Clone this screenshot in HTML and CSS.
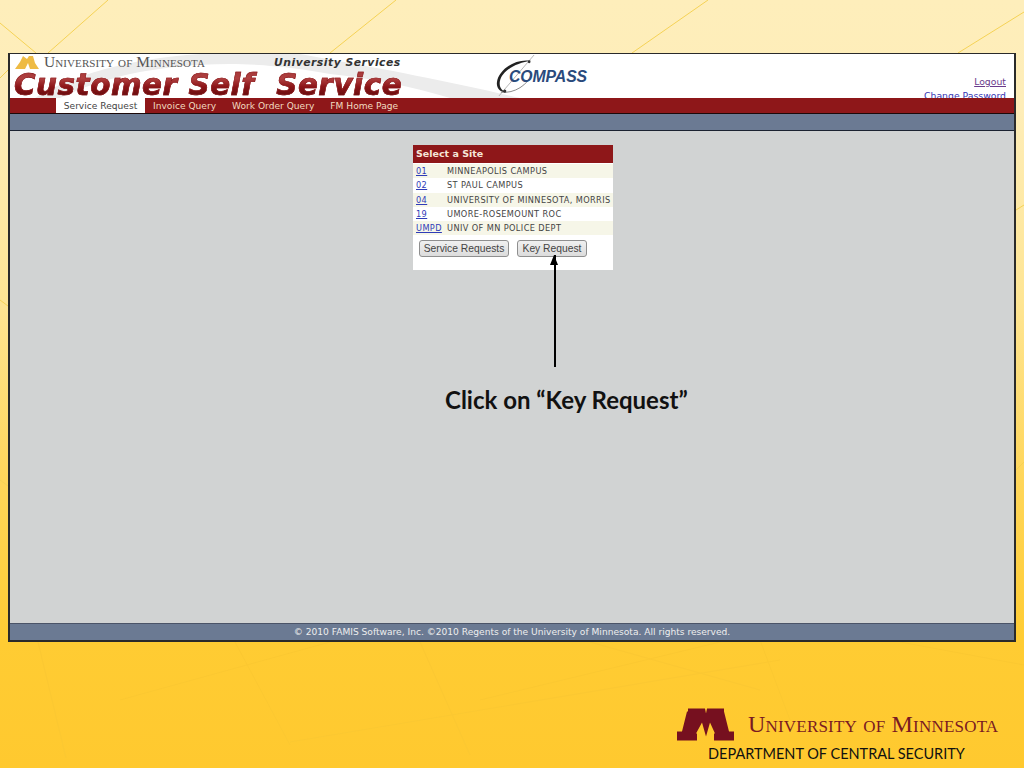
FILE: index.html
```html
<!DOCTYPE html>
<html lang="en">
<head>
<meta charset="utf-8">
<title>Customer Self Service</title>
<link rel="stylesheet" href="styles.css">
</head>
<body>
<svg class="bg-lines" viewBox="0 0 1024 768" aria-hidden="true">
  <g class="line-top">
    <path d="M48 53 L108 0"/><path d="M0 23 L36 53"/><path d="M0 78 L8 70"/><path d="M330 53 L396 0"/><path d="M632 53 L708 0"/><path d="M958 53 L1024 12"/>
    <path d="M1016 210 L1024 205"/><path d="M0 300 L8 306"/><path d="M1016 470 L1024 462"/><path d="M0 480 L8 486"/>
  </g>
  <g class="line-bottom">
    <path d="M38 642 L66 758"/><path d="M120 700 L330 642"/><path d="M235 642 L290 745"/><path d="M420 642 L470 755"/><path d="M290 742 L780 660"/><path d="M590 642 L760 690"/><path d="M480 700 L720 642"/><path d="M760 640 L790 720"/><path d="M900 642 L1024 665"/>
  </g>
</svg>
<main class="window">
  <header class="masthead">
    <svg class="swoosh" viewBox="0 0 1004 44" aria-hidden="true"><path d="M25 44 C60 22 120 4 190 0 L290 0 L323 6 C370 14 450 30 510 44 L440 44 C400 32 360 24 320 20 C290 14 250 10 220 10 C180 10 150 14 120 20 C95 26 70 34 50 44 Z"/></svg>
    <div class="brand">
      <div class="brand-top">
        <svg class="mini-m" viewBox="0 0 24 14" aria-hidden="true"><path d="M0 14 L5 7 L8 1 L12 4 L14 1 L18 1 L20 8 L24 14 L15 14 L13 8 L10 14 Z"/></svg>
        <span class="umn-small">University of Minnesota</span>
        <span class="services">University Services</span>
      </div>
      <div class="product">Customer Self&nbsp; Service</div>
    </div>
    <div class="compass">
      <svg class="compass-orbit" viewBox="0 0 42 42" aria-hidden="true">
        <path class="needle" d="M40 0 L4 42"/>
        <path class="orbit" d="M37 6 C20 3 3 16 2 28 C1 35 7 39 12 38 C7 37 4 33 5 27 C7 16 22 8 37 6 Z"/>
        <path class="orbit-thin" d="M6 38 C20 40 34 30 37 20"/>
        <circle class="pin" cx="35" cy="7" r="1.4"/><circle class="pin" cx="10" cy="37" r="1.6"/>
      </svg>
      <span class="compass-word">COMPASS</span>
    </div>
    <div class="account">
      <a class="logout" href="#">Logout</a>
      <a href="#">Change Password</a>
    </div>
  </header>
  <nav class="tabs">
    <a class="tab active" href="#">Service Request</a>
    <a class="tab" href="#">Invoice Query</a>
    <a class="tab" href="#">Work Order Query</a>
    <a class="tab" href="#">FM Home Page</a>
  </nav>
  <div class="subbar"></div>
  <section class="content">
    <div class="card">
      <h2 class="card-title">Select a Site</h2>
      <div class="site-row odd"><a href="#">01</a><span>MINNEAPOLIS CAMPUS</span></div>
      <div class="site-row"><a href="#">02</a><span>ST PAUL CAMPUS</span></div>
      <div class="site-row odd"><a href="#">04</a><span>UNIVERSITY OF MINNESOTA, MORRIS</span></div>
      <div class="site-row"><a href="#">19</a><span>UMORE-ROSEMOUNT ROC</span></div>
      <div class="site-row odd"><a href="#">UMPD</a><span>UNIV OF MN POLICE DEPT</span></div>
      <div class="actions">
        <button class="btn btn-service" type="button">Service Requests</button>
        <button class="btn btn-key" type="button">Key Request</button>
      </div>
    </div>
    <div class="arrow"></div>
    <p class="callout">Click on “Key Request”</p>
  </section>
  <footer class="legal">© 2010 FAMIS Software, Inc. ©2010 Regents of the University of Minnesota. All rights reserved.</footer>
</main>
<div class="slide-foot">
  <div class="umn-row">
    <svg class="umn-m" viewBox="0 0 57 32" aria-hidden="true"><path d="M11 0 H28 L29 5 L30 0 H47 V3 L52 23 H57 V32 H37 V25 H38 L33 14 L29 28 L25 14 L19 25 H20 V32 H0 V23 H5 L10 3 H11 Z"/></svg>
    <span class="umn-name">University of Minnesota</span>
  </div>
  <div class="dept">DEPARTMENT OF CENTRAL SECURITY</div>
</div>
</body>
</html>
```
FILE: styles.css
```css
* { box-sizing: border-box; }
html, body { margin: 0; height: 768px; overflow: hidden; }
body {
  position: relative;
  padding: 53px 8px 0;
  background: linear-gradient(180deg, #feeebb 0, #feedb8 110px, #fee594 300px, #ffd65a 480px, #ffcc33 640px, #ffc92f 768px);
  font-family: "DejaVu Sans", sans-serif;
}
.bg-lines { position: absolute; left: 0; top: 0; width: 1024px; height: 768px; }
.bg-lines path { fill: none; stroke-width: 1; }
.line-top { stroke: #f5d256; }
.line-bottom { stroke: #fbc832; }
.window {
  position: relative;
  display: flex;
  flex-direction: column;
  width: 1008px;
  height: 589px;
  border: 1px solid #2a2a2a;
  border-width: 1px 2px 2px 2px;
  background: #d1d3d3;
}
.masthead {
  position: relative;
  display: flex;
  height: 44px;
  overflow: hidden;
  background: #fff;
}
.swoosh { position: absolute; left: 0; top: 0; width: 1004px; height: 44px; fill: #ececec; }
.brand { position: relative; width: 392px; padding: 0 0 0 4px; }
.brand-top { display: flex; align-items: center; height: 16px; }
.mini-m { width: 24px; height: 14px; margin-left: 1px; fill: #eebb44; flex: none; }
.umn-small {
  margin-left: 5px;
  width: 230px;
  font: 15.4px/16px "Liberation Serif", serif;
  font-variant: small-caps;
  letter-spacing: 0.1px;
  color: #555;
  white-space: nowrap;
}
.services {
  padding-top: 1px;
  font: italic 700 10.8px/16px "DejaVu Sans", sans-serif;
  letter-spacing: 0.5px;
  color: #333;
  white-space: nowrap;
}
.product {
  width: max-content;
  font: italic 700 31px/28px "DejaVu Sans", sans-serif;
  letter-spacing: 0.6px;
  white-space: nowrap;
  transform: scaleX(0.947);
  transform-origin: left center;
  background: linear-gradient(180deg, #a43838 0, #b04040 30%, #8c1518 60%, #5e0b0d 100%);
  -webkit-background-clip: text;
  background-clip: text;
  color: transparent;
  -webkit-text-stroke: 0.6px #8a1a1c;
}
.compass { position: relative; display: flex; margin-left: 93px; width: 100px; height: 44px; }
.compass-orbit { position: absolute; left: 0; top: 1px; width: 41px; height: 41px; }
.needle { stroke: #b5b5b5; stroke-width: 1; fill: none; }
.orbit { fill: #222; }
.orbit-thin { fill: none; stroke: #555; stroke-width: .7; }
.pin { fill: #333; }
.compass-word {
  position: relative;
  margin: 14px 0 0 14px;
  font: italic 700 15.8px/18px "Liberation Sans", sans-serif;
  letter-spacing: -0.1px;
  color: #2a4a7c;
  white-space: nowrap;
}
.account {
  position: relative;
  display: flex;
  flex-direction: column;
  align-items: flex-end;
  gap: 5px;
  margin-left: auto;
  padding: 23px 8px 0 0;
  font-size: 9.3px;
  line-height: 9px;
}
.account a { color: #3535b5; }
.account .logout { color: #6a3a8c; }
.tabs {
  display: flex;
  gap: 16px;
  height: 16px;
  padding-left: 46px;
  border-bottom: 1px solid #1c0808;
  background: #8e1719;
}
.tab {
  font-size: 9.1px;
  line-height: 16px;
  color: #f2dcc0;
  text-decoration: none;
  white-space: nowrap;
}
.tab.active { width: 89px; margin-right: -8px; background: #fff; color: #444; text-align: center; }
.subbar {
  height: 17px;
  border-bottom: 1px solid #1b2230;
  background: #6b7a93;
}
.content { position: relative; flex: 1; }
.card {
  position: absolute;
  left: 403px;
  top: 14px;
  width: 200px;
  height: 125px;
  background: #fff;
}
.card-title {
  margin: 0 0 1px;
  height: 18px;
  padding-left: 3px;
  background: #8e1719;
  color: #f6e6d8;
  font: 700 9.5px/18px "DejaVu Sans", sans-serif;
}
.site-row {
  display: flex;
  height: 14.3px;
  padding-left: 3px;
  font-size: 8.2px;
  line-height: 15px;
  letter-spacing: 0.4px;
  color: #444;
  white-space: nowrap;
}
.site-row.odd { background: #f6f6e8; }
.site-row a { width: 31px; color: #2f3cb8; }
.actions { display: flex; gap: 8px; padding: 5px 0 0 6px; }
.btn {
  height: 17px;
  padding: 0;
  border: 1px solid #8f8f8f;
  border-radius: 3px;
  background: linear-gradient(180deg, #f0f0f0, #dcdcdc);
  color: #444;
  font: 10.3px/15px "Liberation Sans", sans-serif;
  white-space: nowrap;
}
.btn-service { width: 90px; }
.btn-key { width: 70px; }
.arrow {
  position: absolute;
  left: 544px;
  top: 124px;
  width: 1.5px;
  height: 112px;
  background: #000;
}
.arrow::before {
  content: "";
  position: absolute;
  left: -4px;
  top: 0;
  border: 4px solid transparent;
  border-top: 0;
  border-bottom: 10px solid #000;
}
.callout {
  position: absolute;
  left: 435px;
  top: 255px;
  margin: 0;
  font: 700 24px/28px Lato, sans-serif;
  color: #111;
  white-space: nowrap;
}
.legal {
  height: 17px;
  border-top: 1px solid #4b5468;
  background: #6b7a93;
  color: #eee;
  font-size: 9.1px;
  line-height: 16px;
  text-align: center;
}
.slide-foot {
  position: absolute;
  left: 677px;
  top: 708px;
}
.umn-row { display: flex; align-items: center; gap: 14px; height: 33px; }
.umn-m { width: 57px; height: 33px; fill: #76101f; flex: none; }
.umn-name {
  margin-bottom: 2px;
  font: 24px/30px "Liberation Serif", serif;
  font-variant: small-caps;
  letter-spacing: 0.2px;
  color: #7a1a22;
  white-space: nowrap;
}
.dept {
  margin: 3px 0 0 31px;
  font: 14.5px/19px Lato, sans-serif;
  color: #111;
  white-space: nowrap;
}
```
